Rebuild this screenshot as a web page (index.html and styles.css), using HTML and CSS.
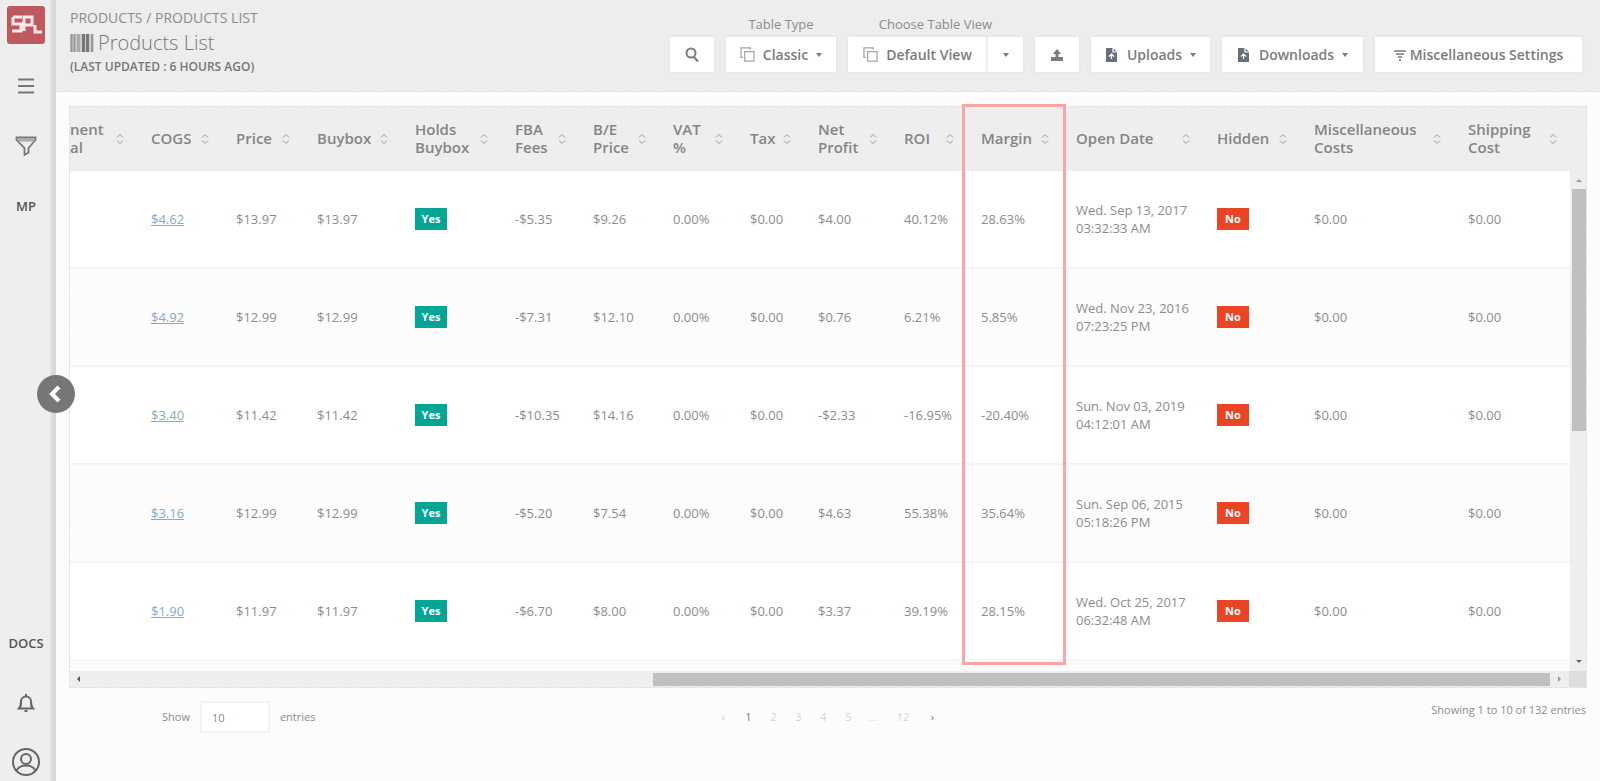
FILE: index.html
```html
<!DOCTYPE html>
<html lang="en">
<head>
<meta charset="utf-8">
<title>Products List</title>
<link rel="stylesheet" href="styles.css">
</head>
<body>
<svg class="defs" width="0" height="0" aria-hidden="true">
  <symbol id="sort" viewBox="0 0 8 12"><path d="M1 4.5 4 1.5 7 4.5M1 7.5 4 10.5 7 7.5" fill="none" stroke="currentColor"/></symbol>
  <symbol id="copy" viewBox="0 0 16 16"><path d="M3 11H1V1h10v2M5 5h10v10H5z" fill="none" stroke="#a5a5a5" stroke-width="1.3"/></symbol>
  <symbol id="caret" viewBox="0 0 6 4"><path d="M0 0h6L3 4z" fill="currentColor"/></symbol>
  <symbol id="file" viewBox="0 0 14 16"><path d="M1 1h7l4 4v10H1z" fill="#68707c"/><path d="M8 1v4h4M4 9.500l2.500-2.500 2.500 2.500M6.500 7v5" fill="none" stroke="#fff" stroke-width="1.200"/></symbol>
</svg>
<div class="app">
  <nav class="side">
    <a class="logo" href="#" aria-label="Home"><svg viewBox="0 0 38 38"><rect width="38" height="38" rx="3" fill="#c0595f"/><path d="M6 11h9M6 11v7h8v7H5M17 25V11h8v8h-8M28 19v7h7" fill="none" stroke="#fae9e9" stroke-width="3"/></svg></a>
    <button class="ico" aria-label="Menu"><svg width="18" height="18" viewBox="0 0 18 18"><path d="M1 2.500h16M1 9h16M1 15.500h16" stroke="#777" stroke-width="2"/></svg></button>
    <button class="ico" aria-label="Filter"><svg width="22" height="22" viewBox="0 0 22 22"><path d="M1.500 2.500h19v2.500l-7 8v4.500l-4 2.500v-7l-8-8z" fill="none" stroke="#777" stroke-width="1.800"/><path d="M3 5h16" stroke="#aaa" stroke-width="3"/></svg></button>
    <a class="word" href="#">MP</a>
    <span class="grow"></span>
    <a class="word" href="#">DOCS</a>
    <button class="ico" aria-label="Notifications"><svg width="18" height="20" viewBox="0 0 18 20"><path d="M2 15.500c2-2 2-3 2-7a5 5 0 0 1 10 0c0 4 0 5 2 7zM9 1v2.500M7.500 18h3" fill="none" stroke="#666" stroke-width="2"/></svg></button>
    <button class="ico" aria-label="Account"><svg width="30" height="30" viewBox="0 0 30 30" fill="none" stroke="#666" stroke-width="2"><circle cx="15" cy="15" r="13"/><circle cx="15" cy="12" r="5"/><path d="M5.500 23.500c2-3.500 5-5 9.500-5s7.500 1.500 9.500 5"/></svg></button>
    <button class="collapse" aria-label="Collapse"><svg width="38" height="38" viewBox="0 0 38 38"><path d="m22 12-7 7 7 7" fill="none" stroke="#fff" stroke-width="4"/></svg></button>
  </nav>
  <main class="page">
    <header class="top">
      <div class="heading">
        <div class="crumbs"><a href="#">PRODUCTS</a> / <a href="#">PRODUCTS LIST</a></div>
        <h1><svg width="24" height="18" viewBox="0 0 24 18"><path d="M0 0h24v18H0z" fill="#ccc"/><path d="M1.500 0v18M4.500 0v18" stroke="#999" stroke-width="2"/><path d="M8.500 0v18" stroke="#aaa" stroke-width="3"/><path d="M13.500 0v18M17.500 0v18" stroke="#777" stroke-width="3"/><path d="M22 0v18" stroke="#999" stroke-width="2"/></svg>Products List</h1>
        <p class="updated">(LAST UPDATED : 6 HOURS AGO)</p>
      </div>
      <div class="tools">
        <button class="btn sq" aria-label="Search"><svg width="14" height="16" viewBox="0 0 14 16"><circle cx="6" cy="6" r="4.500" fill="none" stroke="currentColor" stroke-width="2"/><path d="m9 10 4 4.500" stroke="currentColor" stroke-width="2"/></svg></button>
        <div class="field"><span>Table Type</span><button class="btn classic"><svg width="15" height="15"><use href="#copy"/></svg>Classic<svg class="caret" width="6" height="4"><use href="#caret"/></svg></button></div>
        <div class="field"><span>Choose Table View</span><div class="split"><button class="btn view"><svg width="15" height="15"><use href="#copy"/></svg>Default View</button><button class="btn drop" aria-label="Views"><svg class="caret" width="6" height="4"><use href="#caret"/></svg></button></div></div>
        <button class="btn sq" aria-label="Export"><svg width="14" height="14" viewBox="0 0 14 14"><path d="M7 1 3 6h2.500v3h3V6H11zM1 9h12v4H1z" fill="currentColor"/></svg></button>
        <button class="btn up"><svg width="14" height="16"><use href="#file"/></svg>Uploads<svg class="caret" width="6" height="4"><use href="#caret"/></svg></button>
        <button class="btn down"><svg width="14" height="16"><use href="#file"/></svg>Downloads<svg class="caret" width="6" height="4"><use href="#caret"/></svg></button>
        <button class="btn misc"><svg width="12" height="12" viewBox="0 0 12 12"><path d="M0 2h12M2 5h8M4 8h4M5 11h2" stroke="currentColor" stroke-width="1.300"/></svg>Miscellaneous Settings</button>
      </div>
    </header>
    <section class="card">
      <div class="view-area">
        <table>
          <colgroup><col class="w0"><col class="w1"><col class="w2"><col class="w3"><col class="w4"><col class="w5"><col class="w6"><col class="w7"><col class="w8"><col class="w9"><col class="w10"><col class="w11"><col class="w12"><col class="w13"><col class="w14"><col class="w15"></colgroup>
          <thead><tr>
            <th class="cut"><div>nent<br>al<svg><use href="#sort"/></svg></div></th>
            <th><div>COGS<svg><use href="#sort"/></svg></div></th>
            <th><div>Price<svg><use href="#sort"/></svg></div></th>
            <th><div>Buybox<svg><use href="#sort"/></svg></div></th>
            <th><div>Holds<br>Buybox<svg><use href="#sort"/></svg></div></th>
            <th><div>FBA<br>Fees<svg><use href="#sort"/></svg></div></th>
            <th><div>B/E<br>Price<svg><use href="#sort"/></svg></div></th>
            <th><div>VAT<br>%<svg><use href="#sort"/></svg></div></th>
            <th><div>Tax<svg><use href="#sort"/></svg></div></th>
            <th><div>Net<br>Profit<svg><use href="#sort"/></svg></div></th>
            <th><div>ROI<svg><use href="#sort"/></svg></div></th>
            <th><div>Margin<svg><use href="#sort"/></svg></div><span class="mark"></span></th>
            <th><div>Open Date<svg><use href="#sort"/></svg></div></th>
            <th><div>Hidden<svg><use href="#sort"/></svg></div></th>
            <th><div>Miscellaneous<br>Costs<svg><use href="#sort"/></svg></div></th>
            <th><div>Shipping<br>Cost<svg><use href="#sort"/></svg></div></th>
          </tr></thead>
          <tbody>
            <tr><td></td><td><a href="#">$4.62</a></td><td>$13.97</td><td>$13.97</td><td><b class="tag yes">Yes</b></td><td>-$5.35</td><td>$9.26</td><td>0.00%</td><td>$0.00</td><td>$4.00</td><td>40.12%</td><td>28.63%</td><td>Wed. Sep 13, 2017<br>03:32:33 AM</td><td><b class="tag no">No</b></td><td>$0.00</td><td>$0.00</td></tr>
            <tr><td></td><td><a href="#">$4.92</a></td><td>$12.99</td><td>$12.99</td><td><b class="tag yes">Yes</b></td><td>-$7.31</td><td>$12.10</td><td>0.00%</td><td>$0.00</td><td>$0.76</td><td>6.21%</td><td>5.85%</td><td>Wed. Nov 23, 2016<br>07:23:25 PM</td><td><b class="tag no">No</b></td><td>$0.00</td><td>$0.00</td></tr>
            <tr><td></td><td><a href="#">$3.40</a></td><td>$11.42</td><td>$11.42</td><td><b class="tag yes">Yes</b></td><td>-$10.35</td><td>$14.16</td><td>0.00%</td><td>$0.00</td><td>-$2.33</td><td>-16.95%</td><td>-20.40%</td><td>Sun. Nov 03, 2019<br>04:12:01 AM</td><td><b class="tag no">No</b></td><td>$0.00</td><td>$0.00</td></tr>
            <tr><td></td><td><a href="#">$3.16</a></td><td>$12.99</td><td>$12.99</td><td><b class="tag yes">Yes</b></td><td>-$5.20</td><td>$7.54</td><td>0.00%</td><td>$0.00</td><td>$4.63</td><td>55.38%</td><td>35.64%</td><td>Sun. Sep 06, 2015<br>05:18:26 PM</td><td><b class="tag no">No</b></td><td>$0.00</td><td>$0.00</td></tr>
            <tr><td></td><td><a href="#">$1.90</a></td><td>$11.97</td><td>$11.97</td><td><b class="tag yes">Yes</b></td><td>-$6.70</td><td>$8.00</td><td>0.00%</td><td>$0.00</td><td>$3.37</td><td>39.19%</td><td>28.15%</td><td>Wed. Oct 25, 2017<br>06:32:48 AM</td><td><b class="tag no">No</b></td><td>$0.00</td><td>$0.00</td></tr>
          </tbody>
        </table>
        <div class="vbar"><i class="arrow a-up"></i><div class="vtrack"><div class="vthumb"></div></div><i class="arrow a-down"></i></div>
      </div>
      <div class="hbar"><i class="arrow a-left"></i><div class="htrack"><div class="hthumb"></div></div><i class="arrow a-right"></i><span class="corner"></span></div>
    </section>
    <footer class="foot">
      <div class="show"><label for="len">Show</label><input id="len" type="text" value="10"><label for="len">entries</label></div>
      <div class="pages"><a href="#">‹</a><a class="on" href="#">1</a><a href="#">2</a><a href="#">3</a><a href="#">4</a><a href="#">5</a><span>...</span><a class="last" href="#">12</a><a class="on" href="#">›</a></div>
      <div class="info">Showing 1 to 10 of 132 entries</div>
    </footer>
  </main>
</div>
</body>
</html>
```
FILE: styles.css
```css
* { box-sizing: border-box; }
body { margin: 0; background: #fcfcfc; color: #8c8c8c; font: 13px/18px "Open Sans", sans-serif; }
button { border: 0; padding: 0; background: none; font: inherit; color: inherit; }
a { color: inherit; text-decoration: none; }
.defs { position: absolute; }
.app { display: flex; min-height: 100vh; }

.side { position: relative; flex: none; width: 56px; display: flex; flex-direction: column; align-items: center; padding: 6px 0 0; background: #eee; border-right: 4px solid #d8d8d8; box-shadow: inset -2px 0 0 #e3e3e3; }
.logo { height: 38px; }
.logo svg { width: 38px; height: 38px; }
.ico { display: flex; align-items: center; justify-content: center; height: 60px; }
.logo + .ico { margin-top: 12px; }
.word { display: flex; align-items: center; height: 60px; font-size: 13px; font-weight: 600; color: #555; }
.grow { flex: 1; }
.side .ico:nth-last-child(2) { height: 58px; margin-bottom: -10px; }
.collapse { position: absolute; top: 375px; left: 37px; z-index: 3; width: 38px; height: 38px; border-radius: 50%; background: #777; }

.page { flex: 1; min-width: 0; }
.top { display: flex; justify-content: space-between; height: 92px; padding: 9px 18px 0 14px; background: #ededed; border-bottom: 1px dashed #e0e0e0; }
.crumbs { font-size: 14px; }
h1 { display: flex; align-items: center; gap: 4px; margin: 3px 0 2px; font-size: 20px; line-height: 26px; font-weight: 300; color: #777; }
.updated { margin: 2px 0; font-size: 12px; font-weight: 600; color: #777; }
.tools { display: flex; align-items: flex-end; gap: 12px; padding-bottom: 19px; color: #777; }
.field { display: flex; flex-direction: column; align-items: center; gap: 4px; color: #8c8c8c; }
.btn { display: flex; align-items: center; justify-content: center; gap: 8px; height: 35px; background: #fff; box-shadow: 0 0 3px #ddd; font-size: 14px; font-weight: 600; color: #7c7c7c; white-space: nowrap; }
.sq { width: 44px; }
.classic { width: 110px; }
.split { display: flex; }
.view { width: 139px; }
.drop { width: 36px; border-left: 1px solid #eee; }
.up { width: 119px; }
.down { width: 141px; }
.misc { width: 207px; gap: 4px; }

.card { margin: 14px 13px 0; border: 1px dashed #e0e0e0; background: #eee; }
.view-area { display: flex; }
table { flex: 1; width: 100%; table-layout: fixed; border-collapse: separate; border-spacing: 0; background: #fff; border-bottom: 10px solid #fbfbfb; }
th { position: relative; height: 64px; padding: 0 14px 2px; background: #eee; font-size: 15px; font-weight: 600; color: #858585; text-align: left; white-space: nowrap; }
th svg { position: absolute; top: 26px; right: 13px; width: 8px; height: 12px; color: #999; }
th.cut { padding-left: 0; }
td { height: 98px; padding: 0 0 0 14px; border-bottom: 2px solid #f5f5f5; white-space: nowrap; }
td:first-child { padding: 0; }
tbody tr:nth-child(even) { background: #fcfcfc; }
td a { color: #88a8c6; text-decoration: underline; }
.tag { display: inline-block; width: 32px; font-size: 11px; line-height: 22px; text-align: center; color: #fff; }
.yes { background: #04a594; }
.no { background: #ea4525; }
.mark { position: absolute; z-index: 2; top: -3px; left: -5px; right: -4px; height: 561px; border: 3px solid #f9a5a3; }
.w0 { width: 67px; } .w1 { width: 85px; } .w2 { width: 81px; } .w3 { width: 98px; }
.w4 { width: 100px; } .w5 { width: 78px; } .w6 { width: 80px; } .w7 { width: 77px; }
.w8 { width: 68px; } .w9 { width: 86px; } .w10 { width: 77px; } .w11 { width: 95px; }
.w12 { width: 141px; } .w13 { width: 97px; } .w14 { width: 154px; } .w15 { width: 116px; }

.vbar { flex: none; width: 18px; padding: 72px 2px 8px; display: flex; flex-direction: column; align-items: center; gap: 6px; }
.vtrack { flex: 1; width: 100%; padding-top: 1px; }
.vthumb { height: 52%; background: #c0c0c0; }
.arrow { border: 3px solid transparent; }
.a-up { border-top: 0; border-bottom-color: #999; }
.a-down { border-bottom: 0; border-top-color: #666; }
.hbar { display: flex; align-items: center; height: 16px; padding-left: 7px; }
.htrack { flex: 1; }
.hthumb { width: 61%; height: 13px; margin-left: auto; background: #c0c0c0; }
.a-left { border-left: 0; border-right-color: #555; }
.a-right { margin: 0 8px; border-right: 0; border-left-color: #999; }
.corner { width: 17px; height: 16px; background: #ddd; }

.foot { display: grid; grid-template-columns: 1fr auto 1fr; padding: 13px 14px 0; font-size: 11px; }
.show { display: flex; align-items: center; gap: 10px; padding-left: 92px; }
.show input { width: 70px; height: 32px; padding: 0 10px; border: 2px solid #f3f3f3; background: #fff; font: inherit; color: #888; }
.pages { display: flex; align-items: center; color: #d5d5d5; }
.pages > * { width: 25px; text-align: center; }
.pages .last { width: 34px; }
.pages .on { color: #777; }
.info { justify-self: end; }
```
